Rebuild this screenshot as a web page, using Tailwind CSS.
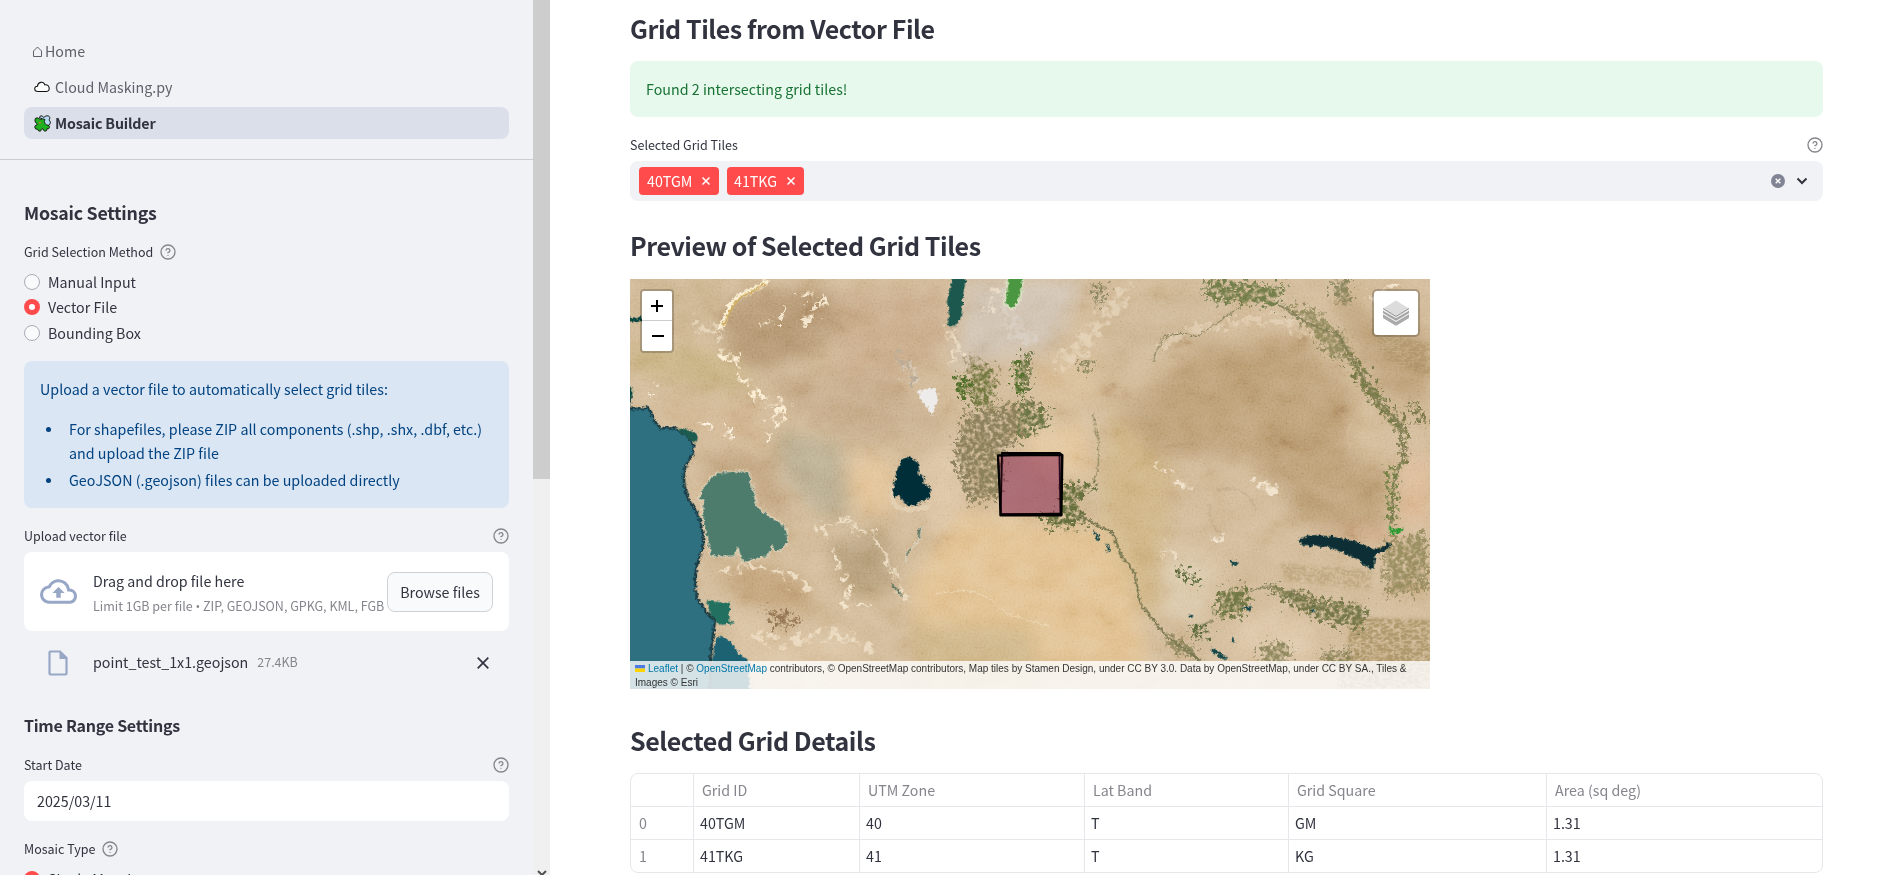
<!DOCTYPE html>
<html lang="en">
<head>
<meta charset="utf-8">
<title>Mosaic Builder</title>
<script src="https://cdn.jsdelivr.net/npm/@tailwindcss/browser@4"></script>
</head>
<body class="bg-white text-[#31333f] font-['Noto_Sans_CJK_SC','Noto_Sans',sans-serif] text-[14.25px] leading-6 whitespace-nowrap">
<svg class="hidden">
  <symbol id="help" viewBox="0 0 24 24"><circle cx="12" cy="12" r="10.500" fill="none" stroke="currentColor" stroke-width="2"/><path d="M9.09 9a3 3 0 0 1 5.83 1c0 2-3 3-3 3M12 17h.01" fill="none" stroke="currentColor" stroke-width="2" stroke-linecap="round" stroke-linejoin="round"/></symbol>
</svg>
<div class="flex h-[875px] w-[1889px] overflow-hidden">
  <aside class="h-full w-[533px] shrink-0 overflow-hidden bg-[#f0f2f6]">
    <nav class="flex flex-col gap-1 border-b border-[#cbccd1] px-6 pt-[35px] pb-5 h-[160px]">
      <a class="flex h-8 items-center pl-[9px] text-[#5f616b]"><svg class="mt-px mr-[3px] h-[11px] w-[9px]" viewBox="0 0 9 11" fill="none" stroke="#5f616b" stroke-width="1"><path d="M.5 10.5V5L4.5 1l4 4v5.500z"/></svg>Home</a>
      <a class="flex h-8 items-center pl-[10px] text-[#5f616b]"><svg class="mr-[5px] h-[12px] w-[16px]" viewBox="0 0 16 12" fill="#fff" stroke="#111" stroke-width="1.1"><path d="M4 10.500C-.5 10.500 0 5 3.500 5.200C3.800 .8 9.500-.2 10.800 3.800C15.800 2.800 16.800 10.500 12.500 10.500Z"/></svg>Cloud Masking.py</a>
      <a class="flex h-8 items-center rounded-lg bg-[#dbdfe9] pl-[10px] font-bold tracking-[-.17px]"><svg class="mr-[4px] h-[17px] w-[17px]" viewBox="0 0 17 17" stroke="#111" stroke-linejoin="round" stroke-width=".9"><path d="M8 3.500L5.500 3L6 1.200L8.200 .8L9.500 2.500L12 .9L14.500 .8L16 2.800L15 5L16.500 7L15.500 10L12 11L9 8Z" fill="#b5dcf2"/><path d="M1.300 3.500Q3 2 4.800 3.600Q6.500 5.300 8.200 3.800L11 4.500Q9.700 6.800 11 8.300L12.300 9.800Q15.500 10 15.500 12.300Q15.200 14.300 13 13.800Q13.200 16.200 11 16.200Q9.200 15.800 9 13.800Q7 13.500 6.600 16.100Q4.200 16.800 3.800 14.300Q1 14.800 .7 12Q.8 10 3.200 9.800Q3.500 8.500 1.800 7.800Q.2 5.500 1.300 3.500Z" fill="#1fb020"/><path d="M4.500 7l3 .3-1.600 1.600z" fill="#e0672c" stroke="none"/></svg>Mosaic Builder</a>
    </nav>
    <div class="px-6 pt-10">
      <h2 class="text-[17.8px] font-bold leading-6 tracking-[-.25px]">Mosaic Settings</h2>
      <div class="mt-[18px] flex h-5 items-center text-[12.5px]">Grid Selection Method<svg class="ml-[7px] size-4 text-[#85868d]"><use href="#help"/></svg></div>
      <div class="mt-[7px] flex flex-col">
        <label class="flex h-[25px] items-center"><span class="mr-2 size-4 rounded-full border border-[#a9abb5] bg-[#f9fafc]"></span>Manual Input</label>
        <label class="flex h-[26px] items-center"><span class="mr-2 flex size-4 items-center justify-center rounded-full bg-[#ff4b4b]"><span class="size-[6px] rounded-full bg-white"></span></span>Vector File</label>
        <label class="flex h-[25px] items-center"><span class="mr-2 size-4 rounded-full border border-[#a9abb5] bg-[#f9fafc]"></span>Bounding Box</label>
      </div>
      <div class="mt-4 h-[147px] rounded-lg bg-[#dae6f4] p-4 tracking-[.025px] text-[#004280]">
        <p>Upload a vector file to automatically select grid tiles:</p>
        <ul class="mt-4 flex flex-col gap-[3px]">
          <li class="flex"><span class="mt-[10px] mr-[18px] ml-[6px] size-[5px] shrink-0 rounded-full bg-[#004280]"></span><span>For shapefiles, please ZIP all components (.shp, .shx, .dbf, etc.)<br>and upload the ZIP file</span></li>
          <li class="flex"><span class="mt-[10px] mr-[18px] ml-[6px] size-[5px] shrink-0 rounded-full bg-[#004280]"></span>GeoJSON (.geojson) files can be uploaded directly</li>
        </ul>
      </div>
      <div class="mt-[18px] flex h-5 items-center justify-between text-[12.5px]">Upload vector file<svg class="size-4 text-[#85868d]"><use href="#help"/></svg></div>
      <div class="mt-[6px] flex h-[79px] items-center rounded-lg bg-white px-4">
        <svg class="mr-4 h-[37px] w-[37px]" viewBox="0 0 24 24" fill="#98a7c6"><path d="M19.350 10.040A7.490 7.490 0 0 0 12 4C9.110 4 6.600 5.640 5.350 8.040A5.994 5.994 0 0 0 0 14c0 3.310 2.690 6 6 6h13c2.760 0 5-2.240 5-5 0-2.640-2.050-4.780-4.650-4.960zM19 18H6c-2.210 0-4-1.790-4-4 0-2.050 1.530-3.760 3.560-3.970l1.070-.11.5-.95A5.469 5.469 0 0 1 12 6c2.620 0 4.880 1.860 5.390 4.430l.3 1.500 1.530.11A2.980 2.980 0 0 1 22 15c0 1.650-1.350 3-3 3zM8 13h2.550v3h2.900v-3H16l-4-4-4 4z"/></svg>
        <div class="w-[294px] shrink-0 pt-px"><p>Drag and drop file here</p><p class="mt-[3px] -mb-px text-[12.500px] leading-5 text-[#85868d]">Limit 1GB per file <span class="font-['Open_Sans',sans-serif]">•</span> ZIP, GEOJSON, GPKG, KML, FGB</p></div>
        <div class="flex h-10 w-[106px] shrink-0 items-center justify-center rounded-lg border border-[#d0d1d7] bg-[#f9fafc]">Browse files</div>
      </div>
      <div class="mt-[11px] flex h-10 items-center pr-[20px] pl-[24px]">
        <svg class="mt-[2px] mr-[25px] h-[26px] w-[20px]" viewBox="0 0 20 26"><path d="M2.500 1.500H12L18.500 8V23.500a1 1 0 0 1-1 1h-15a1 1 0 0 1-1-1v-21a1 1 0 0 1 1-1z" fill="none" stroke="#98a7c6" stroke-width="2.200"/><path d="M11.500 1v8H19z" fill="#98a7c6"/></svg>
        <span>point_test_1x1.geojson</span><span class="ml-[9px] text-[12.46px] text-[#85868d]">27.4KB</span>
        <svg class="mt-px ml-auto size-3" viewBox="0 0 12 12" stroke="#31333f" stroke-width="1.700"><path d="M.7.7l10.600 10.600M11.300.7L.7 11.300"/></svg>
      </div>
      <h3 class="mt-[31px] text-[16px] font-bold leading-6 tracking-[-.25px]">Time Range Settings</h3>
      <div class="mt-[18px] flex h-5 items-center justify-between text-[12.5px]">Start Date<svg class="size-4 text-[#85868d]"><use href="#help"/></svg></div>
      <div class="mt-[6px] flex h-10 items-center rounded-lg bg-white px-[13px]">2025/03/11</div>
      <div class="mt-[18px] flex h-5 items-center text-[12.5px]">Mosaic Type<svg class="ml-[7px] size-4 text-[#85868d]"><use href="#help"/></svg></div>
      <label class="mt-2 flex h-6 items-center"><span class="mr-2 flex size-4 items-center justify-center rounded-full bg-[#ff4b4b]"><span class="size-[6px] rounded-full bg-white"></span></span>Single Mosaic</label>
    </div>
  </aside>
  <div class="flex h-full w-[17px] shrink-0 flex-col justify-between bg-[#f0f0f0]">
    <div class="h-[479px] bg-[#cdcdcd]"></div>
    <svg class="mx-auto h-[5px] w-[10px]" viewBox="0 0 10 5" fill="none" stroke="#505050" stroke-width="2"><path d="M1 1l4 4 4-4"/></svg>
  </div>
  <main class="ml-[80px] w-[1193px] pt-[11px]">
    <h2 class="h-[34px] text-[25px] font-bold leading-[34px] tracking-[-.44px]">Grid Tiles from Vector File</h2>
    <div class="mt-4 flex h-14 items-center rounded-lg bg-[#e7f9ed] px-4 tracking-[.02px] text-[#177233]">Found 2 intersecting grid tiles!</div>
    <div class="mt-[18px] flex h-5 items-center justify-between text-[12.5px]">Selected Grid Tiles<svg class="size-4 text-[#85868d]"><use href="#help"/></svg></div>
    <div class="mt-[6px] flex h-10 items-center rounded-lg bg-[#f0f2f6] pr-[15px] pl-[9px]">
      <div class="flex h-7 w-[80px] items-center justify-between rounded bg-[#ff4b4b] pr-[9px] pl-2 text-white">40TGM<svg class="size-[8px]" viewBox="0 0 8 8" stroke="#fff" stroke-width="1.500"><path d="M.5.5l7 7M7.500.5l-7 7"/></svg></div>
      <div class="ml-2 flex h-7 w-[77px] items-center justify-between rounded bg-[#ff4b4b] pr-[9px] pl-[7px] text-white">41TKG<svg class="size-[8px]" viewBox="0 0 8 8" stroke="#fff" stroke-width="1.500"><path d="M.5.5l7 7M7.500.5l-7 7"/></svg></div>
      <svg class="ml-auto size-[14px]" viewBox="0 0 14 14"><circle cx="7" cy="7" r="7" fill="#808495"/><path d="M4.700 4.700l4.600 4.600M9.300 4.700L4.700 9.300" stroke="#fff" stroke-width="1.400"/></svg>
      <svg class="ml-[11px] h-[8px] w-[12px]" viewBox="0 0 12 8" fill="none" stroke="#31333f" stroke-width="2"><path d="M1.500 1.500L6 6l4.500-4.500"/></svg>
    </div>
    <h2 class="mt-[27px] h-[34px] text-[25px] font-bold leading-[34px] tracking-[-.44px]">Preview of Selected Grid Tiles</h2>
    <div class="relative mt-[17px] h-[410px] w-[800px] overflow-hidden font-['Liberation_Sans',sans-serif]">
      <svg class="block h-[410px] w-[800px]" viewBox="0 0 800 410">
        <defs>
          <filter id="soft" x="-30%" y="-30%" width="160%" height="160%"><feGaussianBlur stdDeviation="9"/></filter>
          <filter id="rough" x="-10%" y="-10%" width="120%" height="120%"><feTurbulence type="fractalNoise" baseFrequency=".09" numOctaves="4" seed="4" result="n"/><feDisplacementMap in="SourceGraphic" in2="n" scale="18" xChannelSelector="R" yChannelSelector="G"/><feGaussianBlur stdDeviation=".9"/></filter>
          <filter id="wisp" x="-10%" y="-10%" width="120%" height="120%"><feTurbulence type="fractalNoise" baseFrequency=".11" numOctaves="5" seed="14" result="n"/><feDisplacementMap in="SourceGraphic" in2="n" scale="26" xChannelSelector="R" yChannelSelector="G" result="d"/><feColorMatrix in="n" values="0 0 0 0 0  0 0 0 0 0  0 0 0 0 0  0 0 5 0 -1.900" result="m"/><feComposite in="d" in2="m" operator="in"/><feGaussianBlur stdDeviation=".5"/></filter>
          <filter id="patchy" x="-20%" y="-20%" width="140%" height="140%"><feTurbulence type="fractalNoise" baseFrequency=".22" numOctaves="4" seed="9" result="n"/><feDisplacementMap in="SourceGraphic" in2="n" scale="28" xChannelSelector="R" yChannelSelector="G" result="d"/><feColorMatrix in="n" values="0 0 0 0 0  0 0 0 0 0  0 0 0 0 0  0 0 3 0 -.75" result="m"/><feComposite in="d" in2="m" operator="in"/><feGaussianBlur stdDeviation=".5"/></filter>
          <filter id="grain" x="0" y="0" width="100%" height="100%"><feTurbulence type="fractalNoise" baseFrequency=".03 .04" numOctaves="7" seed="21"/><feColorMatrix values="1.400 0 0 0 -.18  1.400 0 0 0 -.18  1.400 0 0 0 -.18  0 0 0 0 1"/></filter>
          <filter id="fine" x="0" y="0" width="100%" height="100%"><feTurbulence type="fractalNoise" baseFrequency=".5" numOctaves="2" seed="3"/><feColorMatrix values="1.600 0 0 0 -.3  1.600 0 0 0 -.3  1.600 0 0 0 -.3  0 0 0 0 1"/></filter>
          <filter id="ridge" x="-20%" y="-20%" width="140%" height="140%"><feTurbulence type="turbulence" baseFrequency=".05 .09" numOctaves="5" seed="6" result="n"/><feColorMatrix in="n" values="0 0 0 0 .38  0 0 0 0 .28  0 0 0 0 .12  6 0 0 0 -1.100" result="m"/><feGaussianBlur in="SourceGraphic" stdDeviation="5" result="b"/><feComposite in="m" in2="b" operator="in"/></filter>
        </defs>
        <rect width="800" height="410" fill="#ceb490"/>
        <g filter="url(#soft)">
        <g transform="scale(.33333) translate(-30,-27)">
          <path d="M30 27H300L280 200 30 140z" fill="#c9b08a"/>
          <path d="M330 90L420 60 640 60 640 200 560 260 400 300 300 220z" fill="#b0916b"/>
          <path d="M640 60L970 60 980 250 840 330 640 320z" fill="#c5a682"/>
          <path d="M440 300L840 330 980 480 700 520 500 420z" fill="#c2a682"/>
          <path d="M30 220L330 250 400 360 250 350 30 300z" fill="#c2ab78"/>
          <path d="M90 400L420 400 440 540 240 520z" fill="#ceb08a"/>
          <path d="M470 480L660 520 690 740 600 740 490 620z" fill="#b5a788"/>
          <path d="M690 560L820 570 820 730 700 720z" fill="#e0be8f"/>
          <path d="M930 540L1010 540 1040 700 960 820 900 720z" fill="#d9bf9c"/>
          <path d="M1040 27L1400 27 1300 230 1000 300z" fill="#ccbdaa"/>
          <path d="M1200 500L1400 450 1400 600 1250 620z" fill="#dfbf90"/>
          <path d="M1030 720L1500 780 1590 1200 900 1200 870 940z" fill="#dfbd8b"/>
          <path d="M250 620L240 540 440 560 520 740 420 720 390 600z" fill="#bb9c76"/>
          <path d="M620 820L800 780 830 950 700 980z" fill="#b09872"/>
          <path d="M260 890L520 900 600 1040 400 1000z" fill="#bd9b70"/>
          <path d="M340 1000L500 1100 700 1080 760 1262 400 1262 330 1100z" fill="#d6bd9a"/>
          <path d="M870 1060L1240 1080 1240 1262 900 1262z" fill="#cbb080"/>
        </g>
        <g transform="scale(.33333) translate(1170,-27)">
          <path d="M30 300L220 260 230 400 60 420z" fill="#d4b78e"/>
          <path d="M260 80L560 60 640 150 330 300 240 220z" fill="#c9b08c"/>
          <path d="M560 220L850 200 990 380 980 540 1110 640 1100 790 840 760 700 560 400 560 280 440z" fill="#b8996e"/>
          <path d="M30 470L200 470 220 620 140 620z" fill="#e0c195"/>
          <path d="M280 420L450 600 420 1040 380 1040 240 720z" fill="#cbae7c"/>
          <path d="M430 830L600 860 560 1050 420 1040z" fill="#d8c4a4"/>
          <path d="M640 1040L900 1040 880 1200 640 1200z" fill="#d9c1a0"/>
          <path d="M950 80L1230 200 1230 400 1080 380 960 160z" fill="#ba9b72"/>
          <path d="M1000 360L1100 480 1100 600 990 540z" fill="#cdb28c"/>
          <path d="M1150 560L1230 560 1230 760 1140 770z" fill="#dab48e"/>
          <path d="M880 780L1110 770 1100 820 1000 800z" fill="#d0a682"/>
        </g>
        </g>
        <rect width="800" height="410" filter="url(#grain)" opacity=".34" class="mix-blend-soft-light"/>
        <rect width="800" height="410" filter="url(#fine)" opacity=".24" class="mix-blend-soft-light"/>
        <g transform="scale(.33333) translate(1170,-27)" opacity=".8">
          <path d="M1000 1040L1230 1050 1230 1260 950 1260z" filter="url(#ridge)"/>
          <path d="M1050 180L1230 220 1230 320 1100 270z" filter="url(#ridge)" opacity=".6"/>
          <path d="M780 880L1060 900 1050 960 800 930z" filter="url(#ridge)" opacity=".5"/>
        </g>
        <g filter="url(#wisp)">
          <g transform="scale(.33333) translate(-30,-27)" fill="none" stroke="#f4e6ce">
            <path d="M545 150L620 95M540 80L590 65M500 100l-30 60M430 160l20-10" stroke-width="14"/>
            <path d="M290 240L330 260 370 290M345 320L400 345 430 390 505 410 460 450 440 515" stroke-width="22" stroke="#fbecd4"/>
            <path d="M240 455L268 472M310 480l30 10M95 360l15 15M70 390l8 6" stroke-width="18" stroke="#fff4e5"/>
            <path d="M600 775L690 750 720 780 770 800 815 890 850 980" stroke-width="14" opacity=".8"/>
            <path d="M640 850L690 950 680 1000 750 1010" stroke-width="16"/>
            <path d="M380 870L440 900 520 930 580 960M300 910l80-20" stroke-width="16" opacity=".8"/>
            <path d="M500 1130Q560 1100 640 1100T760 1160M400 1090l60 20" stroke-width="26" opacity=".7"/>
            <path d="M985 180L1010 230 1000 300M1120 50l-20 90" stroke-width="20" opacity=".7"/>
            <path d="M210 150l90 50" stroke-width="30" opacity=".6"/>
            <path d="M860 270l20 60M1150 60l40 120 60 40" stroke="#dcd5cc" stroke-width="40" opacity=".6"/>
            <path d="M840 240l30 70 10 50" stroke="#b9ab99" stroke-width="16"/>
          </g>
          <g transform="scale(.33333) translate(1170,-27)" fill="none" stroke="#f1e3cd">
            <path d="M410 580l30 30M470 640l50 20M700 640l70 20M430 830l40 40M590 820l30-30M1040 60l40 30 40-60" stroke-width="24"/>
            <path d="M110 300L200 200 330 60" stroke-width="50" opacity=".5"/>
            <path d="M420 220L600 160 780 150 900 200" stroke-width="30" opacity=".45"/>
          </g>
        </g>
        <g transform="scale(.33333) translate(-30,-27)" filter="url(#rough)">
          <g fill="none" stroke="#f0e0c4" stroke-linecap="round">
            <path d="M440 36C400 66 345 75 330 110S315 155 302 172" stroke-width="16" stroke="#fbf0d6"/>
            <path d="M434 42C396 70 355 76 338 110S318 155 308 165" stroke-width="7" stroke="#cfac62"/>
            <path d="M950 970L1040 960 1100 980 1160 1030 1290 1070" stroke-width="3" opacity=".7"/>
            <path d="M760 800L800 860 820 930" stroke-width="4" opacity=".7"/>
            <path d="M820 650Q812 700 835 712T925 712" stroke-width="14" stroke="#e3cfb2"/>
          </g>
          <path d="M890 365L945 352 955 385 935 435z" fill="#eeecea"/>
          <path d="M0 412Q60 420 82 414Q100 430 103 452L122 476Q150 468 170 478T212 506Q224 530 218 555Q190 590 192 615Q192 650 202 680Q225 715 238 745Q250 780 250 830Q228 880 226 920Q222 970 240 1000Q262 1030 285 1054Q276 1100 270 1190L272 1290H0z" fill="#2d6f80" stroke="#1a3a42" stroke-width="7"/>
          <path d="M170 478Q205 472 232 492Q236 508 226 518Z" fill="#1d5c50"/>
          <path d="M258 992L330 1000 325 1050 345 1060 300 1065 275 1040z" fill="#217060"/>
          <path d="M292 1100Q320 1100 340 1125L355 1150 385 1170 390 1290H272Q272 1150 292 1100z" fill="#1f6273"/>
          <path d="M10 330l29 30-9 50H10zM10 145l55-5v15H10z" fill="#0f4a42"/>
          <path d="M236 690Q250 630 295 608Q340 600 385 604Q396 615 392 640Q408 660 410 705Q440 735 475 752Q505 770 504 808Q498 835 470 848L455 830 445 856Q400 872 365 876L354 835 345 858 275 860Q262 830 262 800Q240 740 248 690Z" fill="#4e7b6d" stroke="#e6d8bd" stroke-width="4"/>
          <path d="M848 568Q870 556 888 572Q902 588 895 610Q915 618 910 640Q935 648 932 668Q928 690 900 698Q880 712 862 706Q845 695 838 675L820 682Q818 640 832 600Q838 575 848 568z" fill="#062f38"/>
          <path d="M1000 10H1040L1027 90Q1028 150 1010 162Q990 176 983 166Q992 130 980 100Q988 50 1000 10z" fill="#1f594e"/>
          <path d="M1160 10H1208Q1212 90 1178 118L1152 102Q1164 70 1160 10z" fill="#4c9640" stroke="#dfe3c6" stroke-width="6"/>
          <path d="M905 770L895 815 860 850 858 875" fill="none" stroke="#d9d3c0" stroke-width="5"/>
          <path d="M900 775L896 805M870 835L860 855M815 940L845 978" fill="none" stroke="#3d6253" stroke-width="4"/>
        </g>
        <g filter="url(#patchy)">
          <g transform="scale(.33333) translate(-30,-27)">
            <path d="M1040 430L1240 390 1280 450 1180 520 1150 560 1140 680 1050 700 1010 600 1000 540z" fill="#857c55" opacity=".9"/>
            <path d="M1005 320h45v60h-35zM1060 285l60 20-10 90-50 15zM1180 270l50 20-20 90-30-20z" fill="#53702c"/>
            <path d="M1040 250L1130 300 1120 430 1050 400z" fill="#8a8154" opacity=".6"/>
            <path d="M430 1010L550 1050 470 1075z" fill="#8a6943" opacity=".8"/>
          </g>
          <g transform="scale(.33333) translate(1170,-27)">
            <path d="M550 30L800 50 760 110 560 90z" fill="#747f4c"/>
            <path d="M780 100L880 120 980 200 1000 270 930 270 880 190z" fill="#83804f" opacity=".75"/>
            <path d="M980 250L1020 280 1100 400 1150 450 1130 480 1060 400 1000 320z" fill="#7a7c48"/>
            <path d="M0 250h30v100H0zM0 400l90 20-10 50-80 40z" fill="#6d7744"/>
            <path d="M125 640L230 640 170 700 210 760 90 780 60 740 125 735z" fill="#666f3c"/>
            <path d="M1105 590h30l-10 170h-22z" fill="#768347"/>
            <path d="M1140 460h25v120h-20zM1160 390l70 50-20 40z" fill="#7f7d4d"/>
            <path d="M1080 820L1220 780 1230 960 1100 980z" fill="#92885a" opacity=".85"/>
            <path d="M600 960L690 950 670 1040 580 1040z" fill="#717844"/>
            <path d="M730 940L890 980 1040 1010 1030 1080 920 1060 800 1000z" fill="#767848"/>
            <path d="M515 1065l50 10-5 30-40-5zM470 890l70 40-10 15-60-30z" fill="#5c6b3a"/>
            <path d="M430 1090L520 1130 540 1180 440 1130zM720 1120h90v60h-90zM910 1140h80v40h-80z" fill="#807c50" opacity=".8"/>
            <path d="M180 270h40v30h-40zM220 40h35v60h-35zM930 30h60v70h-40z" fill="#6f734a" opacity=".7"/>
          </g>
        </g>
        <g transform="scale(.33333) translate(1170,-27)" filter="url(#rough)">
          <g fill="none" stroke="#7c7a52" stroke-linecap="round" stroke-linejoin="round">
            <path d="M180 735L230 765 280 790 300 850 345 910 360 1000 400 1050 440 1100 540 1170" stroke-width="7"/>
            <path d="M660 110L590 160 530 200 490 190 430 200 400 270" stroke-width="3"/>
            <path d="M780 105L860 160 950 190 1000 270 1060 380 1140 460 1150 560 1120 640 1115 760" stroke-width="6" opacity=".8"/>
            <path d="M235 490L235 590 220 640M220 430l10 70" stroke-width="3"/>
            <path d="M580 1050L540 1070M690 960L760 950 880 990" stroke-width="4"/>
            <path d="M430 530L520 520M590 660q90-20 120 60M570 700q-10 60 40 100" stroke="#9d8763" stroke-width="4" opacity=".3"/>
            <path d="M990 530q-20-40 10-80M840 880L1060 940" stroke="#d9c09c" stroke-width="5" opacity=".6"/>
          </g>
          <path d="M832 812Q855 796 880 795Q930 796 980 808Q1020 820 1065 838Q1090 834 1110 818L1110 830Q1090 848 1067 853L1060 900 1030 885 1015 868 970 848 920 830 850 828z" fill="#082f36"/>
          <path d="M1105 765l15 12 30-5-5 15-35 5z" fill="#2e9a32"/>
          <path d="M220 775l20 30-10 10zM258 815l14 28-8 5zM632 872h20v14h-18zM575 1132l50 32-15 4-35-22zM665 1015l30-8-5 15zM870 1020l12-8v20zM635 1100l12 15-10 4zM505 1035h14v8h-12z" fill="#16484a"/>
        </g>
        <g stroke="#000" stroke-width="2" stroke-linejoin="round" fill-opacity=".2">
          <path d="M368 176.500L429.500 174 430.500 235 371 235z" fill="#a01030"/>
          <path d="M372 174L429.500 174 432.500 176 431.500 236.500 370.500 236.500z" fill="#601a60"/>
          <path d="M368 176.500L432 176 431 234.500 370.500 236z" fill="#801848"/>
        </g>
      </svg>
      <div class="absolute top-[10px] left-[10px] flex w-[34px] flex-col rounded border-2 border-black/20 bg-clip-padding">
        <div class="flex h-[30px] items-center justify-center rounded-t-xs border-b border-[#ccc] bg-white"><svg class="size-3" viewBox="0 0 12 12" stroke="#000" stroke-width="2"><path d="M6 0v12M0 6h12"/></svg></div>
        <div class="flex h-[30px] items-center justify-center rounded-b-xs bg-white"><svg class="ml-px size-3" viewBox="0 0 12 12" stroke="#000" stroke-width="2"><path d="M0 6h12"/></svg></div>
      </div>
      <div class="absolute top-[10px] right-[10px] flex size-12 items-center justify-center rounded-[5px] border-2 border-black/20 bg-white bg-clip-padding">
        <svg class="size-[26px]" viewBox="0 0 26 26"><path d="M0 17L13 24.800 26 17V18L13 25.800 0 18z" fill="#999"/><path d="M0 14L13 21.500 26 14V17L13 25 0 17z" fill="#a8a8a8"/><path d="M0 13L13 20.500 26 13V14.200L13 22 0 14.200z" fill="#eee"/><path d="M0 10.500L13 18 26 10.500V13L13 20.800 0 13z" fill="#a3a3a3"/><path d="M0 9.500L13 17 26 9.500V10.800L13 18.200 0 10.800z" fill="#e8e8e8"/><path d="M0 8.500L13 .5 26 8.500 13 16.500z" fill="#dcdcdc"/><path d="M0 8.500L13 16.500 26 8.500" fill="none" stroke="#8f8f8f"/></svg>
      </div>
      <div class="absolute inset-x-0 bottom-0 h-7 bg-white/80 px-[5px] pt-px text-[10px] leading-[14px] text-[#333]"><svg class="mr-[3px] inline h-[7px] w-[10px] align-baseline" viewBox="0 0 10 7"><path d="M0 0h10v3.500H0z" fill="#4c7be1"/><path d="M0 3.500h10V7H0z" fill="#ffd500"/></svg><span class="text-[#0078a8]">Leaflet</span> | © <span class="text-[#0078a8]">OpenStreetMap</span> contributors, © OpenStreetMap contributors, Map tiles by Stamen Design, under CC BY 3.0. Data by OpenStreetMap, under CC BY SA., Tiles &amp;<br>Images © Esri</div>
    </div>
    <h2 class="mt-[34px] h-[34px] text-[25px] font-bold leading-[34px] tracking-[-.44px]">Selected Grid Details</h2>
    <div class="mt-4 grid h-[100px] w-[1193px] grid-cols-[63px_166px_225px_204px_258px_1fr] grid-rows-[33px_33px_32px] overflow-hidden rounded-lg border border-[#e6e7ea] *:flex *:items-center *:border-[#e6e7ea]">
      <div class="border-r border-b"></div><div class="border-r border-b pl-2 text-[#85868d]">Grid ID</div><div class="border-r border-b pl-2 text-[#85868d]">UTM Zone</div><div class="border-r border-b pl-2 text-[#85868d]">Lat Band</div><div class="border-r border-b pl-2 text-[#85868d]">Grid Square</div><div class="border-b pl-2 text-[#85868d]">Area (sq deg)</div>
      <div class="border-r border-b pl-2 text-[#85868d]">0</div><div class="border-r border-b pl-[6px]">40TGM</div><div class="border-r border-b pl-[6px]">40</div><div class="border-r border-b pl-[6px]">T</div><div class="border-r border-b pl-[6px]">GM</div><div class="border-b pl-[6px]">1.31</div>
      <div class="border-r pl-2 text-[#85868d]">1</div><div class="border-r pl-[6px]">41TKG</div><div class="border-r pl-[6px]">41</div><div class="border-r pl-[6px]">T</div><div class="border-r pl-[6px]">KG</div><div class="pl-[6px]">1.31</div>
    </div>
  </main>
</div>
</body>
</html>
